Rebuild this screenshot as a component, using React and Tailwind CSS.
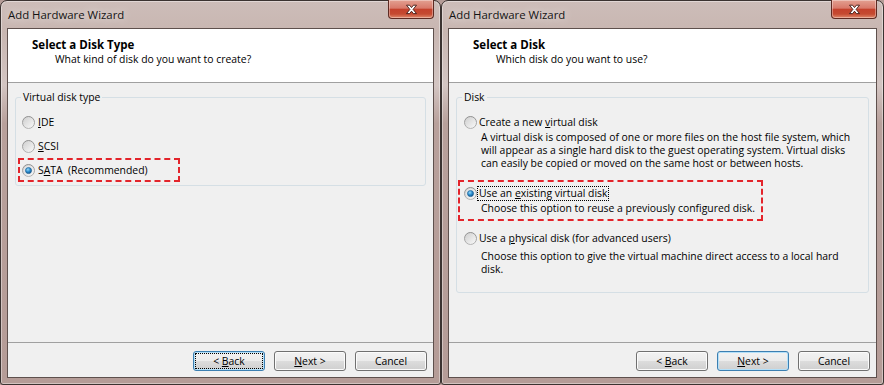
import React from "react";

function Radio({ checked }) {
  return (
    <svg width="13" height="13" viewBox="0 0 13 13" className="shrink-0">
      <defs>
        <linearGradient id="rbRing" x1="0" y1="0" x2="0" y2="1">
          <stop offset="0" stopColor="#8e8e8e" />
          <stop offset="1" stopColor="#b4b4b4" />
        </linearGradient>
        <linearGradient id="rbFill" x1="0" y1="0" x2="1" y2="1">
          <stop offset="0" stopColor="#cdcdcd" />
          <stop offset="1" stopColor="#fbfbfb" />
        </linearGradient>
        <radialGradient id="rbDot" cx="0.4" cy="0.35" r="0.7">
          <stop offset="0" stopColor="#9ad8f7" />
          <stop offset="0.5" stopColor="#2c8fd0" />
          <stop offset="1" stopColor="#0d4f88" />
        </radialGradient>
      </defs>
      <circle cx="6.5" cy="6.5" r="6" fill="url(#rbFill)" stroke="url(#rbRing)" />
      {checked && (
        <>
          <circle cx="6.5" cy="6.5" r="4.2" fill="#f4f4f4" />
          <circle cx="6.5" cy="6.5" r="3.1" fill="url(#rbDot)" stroke="#1b5a8c" strokeWidth="0.6" />
        </>
      )}
    </svg>
  );
}

function CloseButton() {
  return (
    <div className="-mt-px flex h-[19px] w-[46px] shrink-0 items-center justify-center rounded-b-[4px] border border-t-0 border-[#5e2a22] bg-[linear-gradient(#e3a091_0%,#d8796a_45%,#c4412c_52%,#c54a31_78%,#e08a6c_100%)] shadow-[inset_0_0_0_1px_rgba(255,255,255,0.35)]">
      <svg width="13" height="11" viewBox="0 0 13 11">
        <path
          d="M1.5 1.2 H4.6 L6.5 3.6 L8.4 1.2 H11.5 L8.1 5.4 L11.5 9.6 H8.4 L6.5 7.2 L4.6 9.6 H1.5 L4.9 5.4 Z"
          fill="#fff"
          stroke="#3f1a14"
          strokeWidth="0.9"
          strokeLinejoin="round"
        />
      </svg>
    </div>
  );
}

function Btn({ children, focused, dotted }) {
  return (
    <div
      className={
        focused
          ? "relative flex h-[20px] w-[72px] items-center justify-center rounded-[3px] border border-[#3c7fb1] bg-[linear-gradient(#f2f2f2_0%,#ebebeb_50%,#dddddd_50%,#cfcfcf_100%)] shadow-[inset_0_0_0_1px_#b4e0f9]"
          : "relative flex h-[20px] w-[72px] items-center justify-center rounded-[3px] border border-[#707070] bg-[linear-gradient(#f2f2f2_0%,#ebebeb_50%,#dddddd_50%,#cfcfcf_100%)] shadow-[inset_0_0_0_1px_#fbfbfb]"
      }
    >
      {dotted && <span className="absolute inset-[1px] border border-dotted border-black" />}
      <span className="whitespace-pre">{children}</span>
    </div>
  );
}

function Wizard({ width, heading, sub, backFocus, children }) {
  return (
    <div
      className={
        width === 441
          ? "flex h-[385px] w-[441px] shrink-0 flex-col rounded-t-[7px] rounded-b-[3px] border border-[#3b3331] bg-[linear-gradient(180deg,#cdbdb9_0%,#c8b6b1_8%,#d3c5c2_22%,#b8a09b_32%,#b59c97_100%)] px-[6px] pb-[6px] shadow-[inset_0_0_0_1px_rgba(255,255,255,0.4)]"
          : "flex h-[385px] w-[443px] shrink-0 flex-col rounded-t-[7px] rounded-b-[3px] border border-[#3b3331] bg-[linear-gradient(180deg,#cdbdb9_0%,#c8b6b1_8%,#d3c5c2_22%,#b8a09b_32%,#b59c97_100%)] px-[6px] pb-[6px] shadow-[inset_0_0_0_1px_rgba(255,255,255,0.4)]"
      }
    >
      <div className="flex h-[27px] shrink-0 items-start justify-between">
        <span className="mt-[6px] pl-px text-[11.4px] leading-[16px] text-[#141414] [text-shadow:0_0_8px_rgba(255,255,255,0.9)]">
          Add Hardware Wizard
        </span>
        <CloseButton />
      </div>
      <div className="flex flex-1 flex-col border border-[#5e504d] bg-[#f0f0f0] text-[10.4px] leading-[13px]">
        <div className="h-[54px] shrink-0 border-b border-[#a0a0a0] bg-white pl-[24px] pt-[8px]">
          <div className="text-[11.5px] font-bold leading-[15px]">{heading}</div>
          <div className="pl-[23px] leading-[15px]">{sub}</div>
        </div>
        <div className="flex-1 px-[7px] pt-[8px]">{children}</div>
        <div className="flex h-[35px] shrink-0 justify-end gap-[9px] border-t border-[#a0a0a0] pr-[6px] pt-[8px]">
          <Btn focused={backFocus} dotted={backFocus}>
            &lt; <u>B</u>ack
          </Btn>
          <Btn focused={!backFocus}>
            <u>N</u>ext &gt;
          </Btn>
          <Btn>Cancel</Btn>
        </div>
      </div>
    </div>
  );
}

export default function App() {
  return (
    <div className="flex h-[385px] w-[884px] overflow-hidden bg-[#b59c97] font-['Open_Sans',sans-serif] text-black">
      <Wizard width={441} heading="Select a Disk Type" sub="What kind of disk do you want to create?" backFocus>
        <fieldset className="rounded-[3px] border border-[#d5dfe5] pb-[3px]">
          <legend className="ml-[5px] px-[2px] leading-[13px]">Virtual disk type</legend>
          <div className="pt-[6px]">
            <div className="flex h-[24px] items-center gap-[3px] pl-[6px]">
              <Radio />
              <span>
                <u>I</u>DE
              </span>
            </div>
            <div className="flex h-[24px] items-center gap-[3px] pl-[6px]">
              <Radio />
              <span>
                <u>S</u>CSI
              </span>
            </div>
            <div className="ml-[2px] flex h-[24px] w-[162px] items-center gap-[3px] border-2 border-dashed border-[#e3242b] pl-[2px]">
              <Radio checked />
              <span className="whitespace-pre">
                S<u>A</u>TA  (Recommended)
              </span>
            </div>
          </div>
        </fieldset>
      </Wizard>
      <Wizard width={443} heading="Select a Disk" sub="Which disk do you want to use?">
        <fieldset className="rounded-[3px] border border-[#d5dfe5] pb-[16px]">
          <legend className="ml-[5px] px-[2px] leading-[13px]">Disk</legend>
          <div className="pt-[9px]">
            <div className="flex h-[18px] items-center gap-[2px] pl-[7px]">
              <Radio />
              <span>
                Create a new <u>v</u>irtual disk
              </span>
            </div>
            <p className="whitespace-nowrap pl-[24px]">
              A virtual disk is composed of one or more files on the host file system, which
              <br />
              will appear as a single hard disk to the guest operating system. Virtual disks
              <br />
              can easily be copied or moved on the same host or between hosts.
            </p>
            <div className="ml-[1px] mt-[10px] w-[305px] border-2 border-dashed border-[#e3242b] pb-[4px] pl-[4px] pt-[2px]">
              <div className="flex h-[18px] items-center">
                <Radio checked />
                <span className="border border-dotted border-black px-px">
                  Use an <u>e</u>xisting virtual disk
                </span>
              </div>
              <p className="whitespace-nowrap pl-[17px]">Choose this option to reuse a previously configured disk.</p>
            </div>
            <div className="mt-[8px] flex h-[18px] items-center gap-[2px] pl-[7px]">
              <Radio />
              <span>
                Use a <u>p</u>hysical disk (for advanced users)
              </span>
            </div>
            <p className="mt-[3px] whitespace-nowrap pl-[24px]">
              Choose this option to give the virtual machine direct access to a local hard
              <br />
              disk.
            </p>
          </div>
        </fieldset>
      </Wizard>
    </div>
  );
}
